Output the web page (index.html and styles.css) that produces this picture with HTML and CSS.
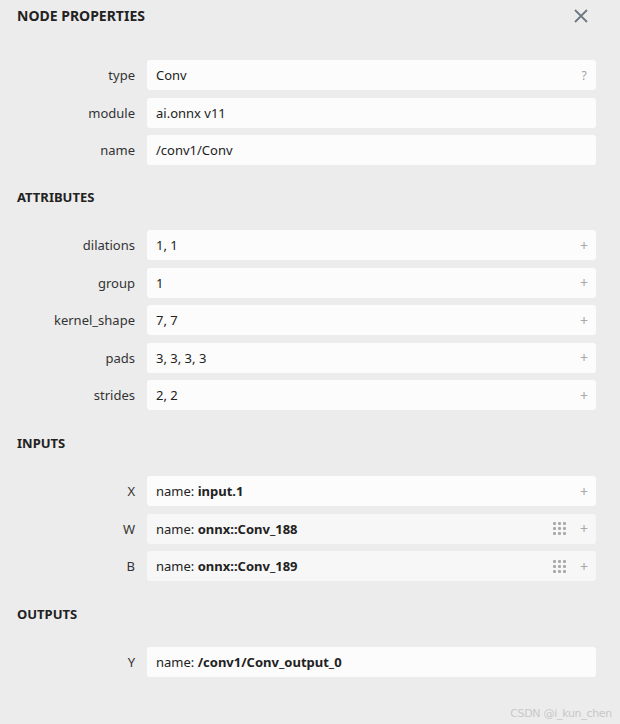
FILE: index.html
```html
<!DOCTYPE html>
<html>
<head>
<meta charset="utf-8">
<link rel="stylesheet" href="styles.css">
</head>
<body>
<div class="panel">
  <header class="title-bar">
    <h1 class="title">NODE PROPERTIES</h1>
    <span class="close"><svg width="14" height="14" viewBox="0 0 14 14"><path d="M1 1L13 13M13 1L1 13" stroke="#6e7883" stroke-width="1.8" fill="none"/></svg></span>
  </header>

  <div class="rows">
    <div class="row"><div class="label">type</div><div class="value"><span>Conv</span><span class="btn q">?</span></div></div>
    <div class="row"><div class="label">module</div><div class="value"><span>ai.onnx v11</span></div></div>
    <div class="row"><div class="label">name</div><div class="value"><span>/conv1/Conv</span></div></div>
  </div>

  <h2 class="section first">ATTRIBUTES</h2>
  <div class="rows">
    <div class="row"><div class="label">dilations</div><div class="value"><span>1, 1</span><span class="btn plus">+</span></div></div>
    <div class="row"><div class="label">group</div><div class="value"><span>1</span><span class="btn plus">+</span></div></div>
    <div class="row"><div class="label">kernel_shape</div><div class="value"><span>7, 7</span><span class="btn plus">+</span></div></div>
    <div class="row"><div class="label">pads</div><div class="value"><span>3, 3, 3, 3</span><span class="btn plus">+</span></div></div>
    <div class="row"><div class="label">strides</div><div class="value"><span>2, 2</span><span class="btn plus">+</span></div></div>
  </div>

  <h2 class="section">INPUTS</h2>
  <div class="rows">
    <div class="row"><div class="label">X</div><div class="value"><span>name: <b>input.1</b></span><span class="btn plus">+</span></div></div>
    <div class="row"><div class="label">W</div><div class="value init"><span>name: <b>onnx::Conv_188</b></span><span class="grid"><i></i><i></i><i></i><i></i><i></i><i></i><i></i><i></i><i></i></span><span class="btn plus">+</span></div></div>
    <div class="row"><div class="label">B</div><div class="value init"><span>name: <b>onnx::Conv_189</b></span><span class="grid"><i></i><i></i><i></i><i></i><i></i><i></i><i></i><i></i><i></i></span><span class="btn plus">+</span></div></div>
  </div>

  <h2 class="section">OUTPUTS</h2>
  <div class="rows">
    <div class="row"><div class="label">Y</div><div class="value"><span>name: <b>/conv1/Conv_output_0</b></span></div></div>
  </div>
</div>
<div class="watermark">CSDN @i_kun_chen</div>
</body>
</html>
```

FILE: styles.css
```css
html, body {
  margin: 0;
  padding: 0;
  background: #ececec;
}
body {
  width: 620px;
  height: 724px;
  overflow: hidden;
  position: relative;
  font-family: "Noto Sans", "Open Sans", sans-serif;
  color: #333;
}
.panel {
  padding: 0 24px 0 17px;
}
.title-bar {
  display: flex;
  align-items: center;
  justify-content: space-between;
  height: 32px;
  margin-bottom: 28px;
}
.title {
  margin: 0;
  font-size: 14px;
  font-weight: 700;
  color: #222;
  line-height: 20px;
}
.close {
  display: flex;
  width: 14px;
  height: 14px;
  margin-right: 8px;
}
.rows {
  display: flex;
  flex-direction: column;
  gap: 7.5px;
}
.row {
  display: grid;
  grid-template-columns: 118px 1fr;
  column-gap: 12px;
  height: 30px;
}
.label {
  text-align: right;
  font-size: 13px;
  line-height: 30px;
  color: #333;
}
.value {
  display: flex;
  align-items: center;
  background: #fcfcfc;
  border-radius: 3px;
  padding: 0 9px;
  font-size: 13px;
  color: #222;
}
.value > span:first-child {
  flex: 1;
}
.value b {
  font-weight: 700;
  color: #222;
}
.value.init {
  background: #f7f7f7;
}
.btn {
  color: #999;
  width: 10px;
  text-align: center;
  margin-right: -2px;
}
.q {
  font-size: 12px;
  color: #a0a4a8;
}
.plus {
  font-size: 14px;
  color: #a8a8a8;
}
.grid {
  display: grid;
  grid-template-columns: repeat(3, 3px);
  grid-auto-rows: 3px;
  gap: 2px;
  margin-right: 13px;
}
.grid i {
  display: block;
  width: 3px;
  height: 3px;
  border-radius: 1px;
  background: #aaa;
}
.section {
  margin: 23px 0 23px 0;
  font-size: 13px;
  font-weight: 700;
  color: #222;
  line-height: 20px;
}
.section.first {
  margin-top: 22px;
}
.watermark {
  position: absolute;
  right: 8px;
  bottom: 4px;
  font-size: 11px;
  color: #c8c8c8;
  font-family: "DejaVu Sans", sans-serif;
  letter-spacing: -0.3px;
}
```
